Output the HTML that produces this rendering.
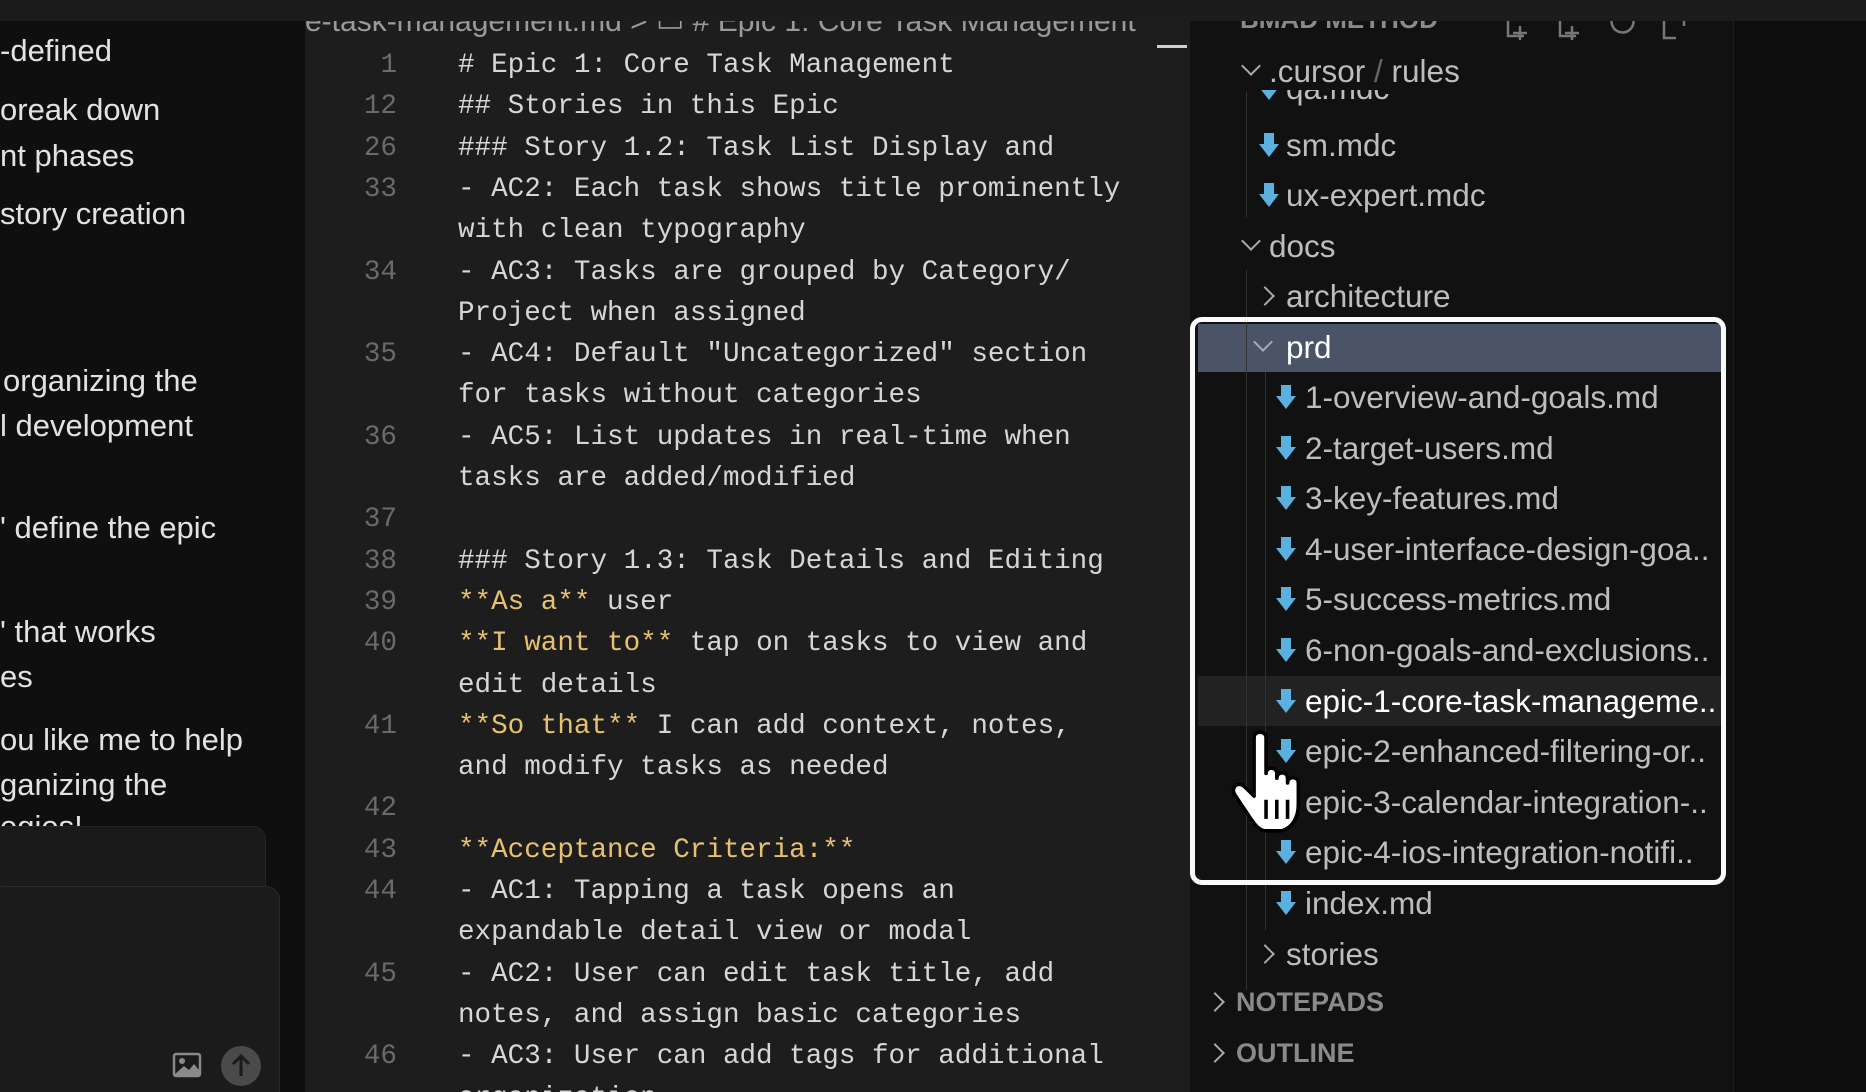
<!DOCTYPE html>
<html><head><meta charset="utf-8"><style>
*{margin:0;padding:0;box-sizing:border-box}
body{width:1866px;height:1092px;background:#121212;overflow:hidden;position:relative;font-family:"Liberation Sans",sans-serif}
.abs{position:absolute}
#chat{left:0;top:0;width:305px;height:1092px;background:#0f0f0f;overflow:hidden}
#chat .t{position:absolute;left:0;color:#e2e2e2;font-size:31px;white-space:nowrap;line-height:34px}
#ed{left:305px;top:0;width:885px;height:1092px;background:#1d1d1d;overflow:hidden}
.row{position:absolute;left:0;height:41px;line-height:41px;font-family:"Liberation Mono",monospace;font-size:27.6px;white-space:nowrap}
.ln{position:absolute;width:92px;text-align:right;color:#6a6a6a}
.code{position:absolute;left:153px;color:#d6d6d6}
.y{color:#e6c170}
#ex{left:1190px;top:0;width:543px;height:1092px;background:#111;overflow:hidden}
.it{position:absolute;height:50px;line-height:50px;color:#bdbdbd;font-size:31.5px;white-space:nowrap}
.ic{position:absolute;width:22px;height:26px}
.chev{position:absolute;width:14px;height:14px;border-right:2px solid #aaa;border-bottom:2px solid #aaa}
#right{left:1733px;top:0;width:133px;height:1092px;background:#0e0e0e;border-left:1px solid #1e1e1e}
</style></head><body>

<div id="chat" class="abs">
<div class="t" style="top:34px">-defined</div>
<div class="t" style="top:93px">oreak down</div>
<div class="t" style="top:139px">nt phases</div>
<div class="t" style="top:197px">story creation</div>
<div class="t" style="top:364px;left:3px">organizing the</div>
<div class="t" style="top:409px">l development</div>
<div class="t" style="top:511px">' define the epic</div>
<div class="t" style="top:615px">' that works</div>
<div class="t" style="top:660px">es</div>
<div class="t" style="top:723px">ou like me to help</div>
<div class="t" style="top:768px">ganizing the</div>
<div class="t" style="top:810px">egies!</div>
<div class="abs" style="left:-10px;top:826px;width:276px;height:90px;background:#1a1a1a;border:1px solid #262626;border-radius:14px"></div>
<div class="abs" style="left:-10px;top:886px;width:290px;height:230px;background:#1b1b1b;border:1px solid #2a2a2a;border-radius:14px"></div>
<svg class="abs" style="left:172px;top:1052px" width="30" height="26" viewBox="0 0 30 26"><rect x="2" y="2" width="26" height="22" rx="2" fill="none" stroke="#8a8a8a" stroke-width="2.5"/><circle cx="10" cy="9" r="3" fill="#8a8a8a"/><path d="M3 22 L12 14 L17 18 L22 12 L27 18 V23 H3Z" fill="#8a8a8a"/></svg>
<div class="abs" style="left:221px;top:1046px;width:40px;height:40px;border-radius:50%;background:#4a4a4a"></div>
<svg class="abs" style="left:221px;top:1046px" width="40" height="40" viewBox="0 0 40 40"><path d="M20 30V11M12 18l8-8 8 8" fill="none" stroke="#1b1b1b" stroke-width="3"/></svg>
</div>

<div id="ed" class="abs">
<div class="abs" style="left:0;top:4px;color:#9a9a9a;font-size:30px;white-space:nowrap">e-task-management.md &gt; ▭ # Epic 1: Core Task Management</div>
<div class="abs" style="left:852px;top:45px;width:30px;height:3px;background:#cfcfcf"></div>
<div id="code"></div>
</div>

<div id="ex" class="abs">
<div class="abs" style="left:50px;top:4px;color:#8a8a8a;font-size:26px;font-weight:bold">BMAD METHOD</div>
<div class="chev" style="left:24px;top:8px;transform:rotate(45deg);width:10px;height:10px"></div>
<svg class="abs" style="left:310px;top:10px" width="230" height="30" viewBox="0 0 230 30"><g fill="none" stroke="#777" stroke-width="2.5"><path d="M8 4V26H24M20 16V30M13 23H27"/><path d="M60 4V26H76M72 16V30M65 23H79"/><path d="M113 6A11 11 0 1 0 133 8"/><path d="M164 4H184V16M164 4V28H176"/></g></svg>
<div id="tree"></div>
</div>

<div id="right" class="abs"></div>

<div class="abs" style="left:0;top:0;width:1866px;height:21px;background:#1c1c1c"></div>

<script>
const rows=[
["1",'# Epic 1: Core Task Management'],
["12",'## Stories in this Epic'],
["26",'### Story 1.2: Task List Display and'],
["33",'- AC2: Each task shows title prominently'],
["",'with clean typography'],
["34",'- AC3: Tasks are grouped by Category/'],
["",'Project when assigned'],
["35",'- AC4: Default "Uncategorized" section'],
["",'for tasks without categories'],
["36",'- AC5: List updates in real-time when'],
["",'tasks are added/modified'],
["37",''],
["38",'### Story 1.3: Task Details and Editing'],
["39",'<span class="y">**As a**</span> user'],
["40",'<span class="y">**I want to**</span> tap on tasks to view and'],
["",'edit details'],
["41",'<span class="y">**So that**</span> I can add context, notes,'],
["",'and modify tasks as needed'],
["42",''],
["43",'<span class="y">**Acceptance Criteria:**</span>'],
["44",'- AC1: Tapping a task opens an'],
["",'expandable detail view or modal'],
["45",'- AC2: User can edit task title, add'],
["",'notes, and assign basic categories'],
["46",'- AC3: User can add tags for additional'],
["",'organization']];
let h='';rows.forEach((r,i)=>{const t=45+i*41.3;h+=`<div class="row" style="top:${t}px;width:885px"><span class="ln">${r[0]}</span><span class="code">${r[1]}</span></div>`});
document.getElementById('code').innerHTML=h;

const arrow='<svg class="ic" viewBox="0 0 22 26"><path d="M6 1H16V12H21L11 25L1 12H6Z" fill="#5ab0de"/></svg>';
const X=1190;
function item(y,x,txt,opt={}){return `<div class="it" style="top:${y-25}px;left:${x-X}px;${opt.c?'color:'+opt.c+';':''}${opt.s||''}">${txt}</div>`}
function icon(y,x){return `<div class="abs" style="left:${x-X}px;top:${y-13}px">${arrow}</div>`}
function chev(y,x,open){return `<div class="chev" style="left:${x-X}px;top:${y-(open?12:7)}px;transform:rotate(${open?45:-45}deg)"></div>`}
let t='';
t+=`<div class="abs" style="left:8px;top:324px;width:527px;height:48px;background:#4b5467"></div>`;
t+=`<div class="abs" style="left:8px;top:676px;width:527px;height:50px;background:#222"></div>`;
t+=`<div class="abs" style="left:${1246-X}px;top:92px;width:1px;height:125px;background:#333"></div>`;
t+=`<div class="abs" style="left:${1246-X}px;top:270px;width:1px;height:720px;background:#333"></div>`;
t+=`<div class="abs" style="left:${1265-X}px;top:372px;width:1px;height:558px;background:#333"></div>`;
t+=icon(88,1258)+item(88,1286,'qa.mdc');
t+=`<div class="abs" style="left:0;top:46px;width:543px;height:44px;background:#111"></div>`;
t+=chev(71,1244,true)+item(71,1269,'.cursor<span style="color:#666"> / </span>rules');
t+=icon(145,1258)+item(145,1286,'sm.mdc');
t+=icon(195,1258)+item(195,1286,'ux-expert.mdc');
t+=chev(246,1244,true)+item(246,1269,'docs');
t+=chev(296,1258,false)+item(296,1286,'architecture');
t+=chev(347,1256,true)+item(347,1286,'prd',{c:'#fff'});
const files=['1-overview-and-goals.md','2-target-users.md','3-key-features.md','4-user-interface-design-goa..','5-success-metrics.md','6-non-goals-and-exclusions..','epic-1-core-task-manageme..','epic-2-enhanced-filtering-or..','epic-3-calendar-integration-..','epic-4-ios-integration-notifi..','index.md'];
files.forEach((f,i)=>{const y=397+i*50.6;t+=icon(y,1275)+item(y,1305,f,i==6?{c:'#fff'}:{});});
t+=chev(954,1258,false)+item(954,1286,'stories');
t+=chev(1002,1208,false)+item(1002,1236,'NOTEPADS',{c:'#8a8a8a',s:'font-weight:bold;font-size:27px'});
t+=chev(1053,1208,false)+item(1053,1236,'OUTLINE',{c:'#8a8a8a',s:'font-weight:bold;font-size:27px'});
t+=`<div class="abs" style="left:0;top:317px;width:536px;height:568px;border:5px solid #fafafa;border-radius:12px"></div>`;
t+=`<svg class="abs" style="left:${1228-X}px;top:728px" width="100" height="110" viewBox="0 0 80 92"><path d="M20 8c0-6 10-6 10 0v30c0-6 9-6 9 0v4c0-6 9-6 9 0v4c0-6 9-6 9 0v18c0 12-6 20-14 22H30c-6 0-10-6-14-12L4 56c-4-6 2-12 8-7l8 8Z" fill="#fff" stroke="#000" stroke-width="3" stroke-linejoin="round"/><path d="M30 60v16M39 60v16M48 60v16" stroke="#000" stroke-width="3"/></svg>`;
document.getElementById('tree').innerHTML=t;
</script>
</body></html>
